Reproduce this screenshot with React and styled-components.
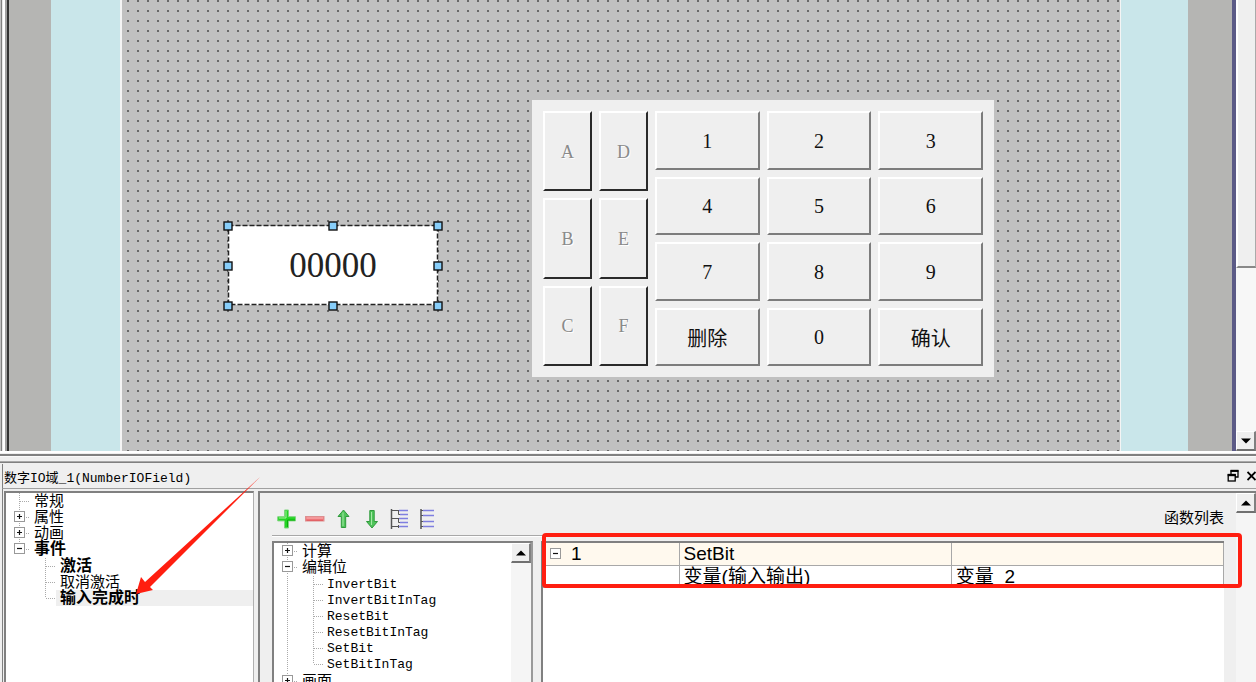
import React, { useState } from "react";
import styled, { createGlobalStyle, css } from "styled-components";

const letterKeys = ["A", "D", "B", "E", "C", "F"];
const digitKeys = ["1", "2", "3", "4", "5", "6", "7", "8", "9", "删除", "0", "确认"];

const eventTree = [
  { label: "常规" },
  { label: "属性", expandable: true },
  { label: "动画", expandable: true },
  {
    label: "事件",
    expandable: true,
    open: true,
    bold: true,
    children: [
      { label: "激活", bold: true },
      { label: "取消激活" },
      { label: "输入完成时", bold: true },
    ],
  },
];

const functionTree = [
  { label: "计算", expandable: true },
  {
    label: "编辑位",
    expandable: true,
    open: true,
    children: [
      { label: "InvertBit" },
      { label: "InvertBitInTag" },
      { label: "ResetBit" },
      { label: "ResetBitInTag" },
      { label: "SetBit" },
      { label: "SetBitInTag" },
    ],
  },
  { label: "画面", expandable: true },
];

export default function App() {
  const [selectedEvent, setSelectedEvent] = useState("输入完成时");
  const [selectedFunction, setSelectedFunction] = useState();

  return (
    <>
      <GlobalStyle />
      <Page>
        <Editor />
        <Dock>
          <TitleBar>
            <DockTitle>数字IO域_1(NumberIOField)</DockTitle>
            <TitleButton aria-label="还原">
              <RestoreIcon />
            </TitleButton>
            <TitleButton aria-label="关闭">
              <CloseIcon />
            </TitleButton>
          </TitleBar>
          <DockBody>
            <EventPane>
              <Tree
                nodes={eventTree}
                selected={selectedEvent}
                onSelect={setSelectedEvent}
              />
              <Arrow viewBox="0 0 130 122" aria-hidden="true">
                <path
                  d="M1 118 L6 101 L10 106 L125 1 L15 111 L18 114 Z"
                  fill="#ff1e10"
                />
              </Arrow>
            </EventPane>
            <FunctionPane>
              <FunctionContent>
                <Toolbar>
                  <ToolButton aria-label="添加">
                    <PlusIcon />
                  </ToolButton>
                  <ToolButton aria-label="移除">
                    <MinusIcon />
                  </ToolButton>
                  <ToolButton aria-label="上移">
                    <UpIcon />
                  </ToolButton>
                  <ToolButton aria-label="下移">
                    <DownIcon />
                  </ToolButton>
                  <ToolButton aria-label="展开">
                    <ExpandIcon />
                  </ToolButton>
                  <ToolButton aria-label="收起">
                    <CollapseIcon />
                  </ToolButton>
                  <ToolbarTitle>函数列表</ToolbarTitle>
                </Toolbar>
                <Panels>
                  <TreePanel>
                    <Tree
                      nodes={functionTree}
                      selected={selectedFunction}
                      onSelect={setSelectedFunction}
                      more
                    />
                    <Scrollbar>
                      <ScrollButton aria-label="向上滚动">
                        <Triangle />
                      </ScrollButton>
                    </Scrollbar>
                  </TreePanel>
                  <TablePanel>
                    <FunctionTable>
                      <tbody>
                        <HeadRow>
                          <td>
                            <IndexCell>
                              <Expander aria-label="折叠">
                                <ExpanderSign open />
                              </Expander>
                              1
                            </IndexCell>
                          </td>
                          <td>SetBit</td>
                          <td />
                        </HeadRow>
                        <tr>
                          <td />
                          <td>变量(输入输出)</td>
                          <td>变量{"\u00a0\u00a0"}2</td>
                        </tr>
                      </tbody>
                    </FunctionTable>
                    <Highlight />
                  </TablePanel>
                </Panels>
              </FunctionContent>
              <Scrollbar>
                <ScrollButton aria-label="向上滚动">
                  <Triangle />
                </ScrollButton>
              </Scrollbar>
            </FunctionPane>
          </DockBody>
        </Dock>
      </Page>
    </>
  );
}

function Editor() {
  return (
    <EditorRow>
      <FrameEdge />
      <Gutter $width={42} />
      <Band $width={69} />
      <Canvas>
        <IOField>
          <input aria-label="数字IO域_1" value="00000" readOnly />
          <SelectionFrame />
        </IOField>
        <Keypad>
          <LetterGrid>
            {letterKeys.map((key) => (
              <LetterKey key={key} disabled>
                {key}
              </LetterKey>
            ))}
          </LetterGrid>
          <DigitGrid>
            {digitKeys.map((key) => (
              <DigitKey key={key}>{key}</DigitKey>
            ))}
          </DigitGrid>
        </Keypad>
      </Canvas>
      <Band $width={67} />
      <Gutter $width={44} />
      <EditorScrollbar>
        <Thumb />
        <Track />
        <ScrollButton aria-label="向下滚动">
          <Triangle down />
        </ScrollButton>
      </EditorScrollbar>
    </EditorRow>
  );
}

function Tree({ nodes, selected, onSelect, more }) {
  return (
    <TreeList>
      {nodes.map((node, index) => {
        const last = index === nodes.length - 1 && !more;
        return (
          <li key={node.label}>
            <TreeRow>
              <Rail $vertical={last ? "half" : "full"}>
                {node.expandable && (
                  <Expander aria-label={node.open ? "折叠" : "展开"}>
                    <ExpanderSign open={node.open} />
                  </Expander>
                )}
              </Rail>
              <TreeLabel $bold={node.bold}>{node.label}</TreeLabel>
            </TreeRow>
            {node.children && (
              <ChildList>
                {node.children.map((child, i) => (
                  <TreeRow as="li" key={child.label}>
                    <ParentRail $line={!last} />
                    <Rail
                      $vertical={
                        i === node.children.length - 1 ? "half" : "full"
                      }
                    />
                    <TreeLabel
                      $bold={child.bold}
                      $latin={/^[A-Z]/i.test(child.label)}
                      $selected={child.label === selected}
                      onClick={() => onSelect(child.label)}
                    >
                      {child.label}
                    </TreeLabel>
                  </TreeRow>
                ))}
              </ChildList>
            )}
          </li>
        );
      })}
    </TreeList>
  );
}

function SelectionFrame() {
  const xs = [5, 110, 215];
  const ys = [5, 45, 85];
  return (
    <FrameSvg viewBox="0 0 220 90" aria-hidden="true">
      <rect
        x="5.5"
        y="4.5"
        width="209"
        height="79"
        fill="none"
        stroke="#222"
        strokeWidth="1.5"
        strokeDasharray="5 2"
      />
      {xs.map((x) =>
        ys.map((y) =>
          x === 110 && y === 45 ? null : (
            <rect
              key={`${x}-${y}`}
              x={x - 4}
              y={y - 4}
              width="8"
              height="8"
              fill="#87cefa"
              stroke="#111"
              strokeWidth="1.4"
            />
          )
        )
      )}
    </FrameSvg>
  );
}

function ExpanderSign({ open }) {
  return (
    <svg width="12" height="12" viewBox="0 0 12 12">
      <rect x="0.5" y="0.5" width="10" height="10" fill="#fff" stroke="#999" />
      <path
        d={open ? "M3 5.5h5" : "M3 5.5h5M5.5 3v5"}
        stroke="#111"
        strokeWidth="1.2"
      />
    </svg>
  );
}

function Triangle({ down }) {
  return (
    <svg width="10" height="6" viewBox="0 0 10 6">
      <path d={down ? "M0 0.5h10L5 5.5z" : "M0 5.5h10L5 0.5z"} fill="#000" />
    </svg>
  );
}

function RestoreIcon() {
  return (
    <svg width="12" height="14" viewBox="0 0 12 14" fill="none" stroke="#000">
      <path d="M4 5V2h7v6H8" strokeWidth="1.3" />
      <path d="M3.5 1.8h8" strokeWidth="2" />
      <rect x="1.2" y="5.5" width="7" height="6.5" strokeWidth="1.3" />
      <path d="M0.7 6.2h8" strokeWidth="2" />
    </svg>
  );
}

function CloseIcon() {
  return (
    <svg width="9" height="10" viewBox="0 0 9 10">
      <path d="M0.5 1l8 8M8.5 1l-8 8" stroke="#000" strokeWidth="1.8" />
    </svg>
  );
}

function PlusIcon() {
  return (
    <svg width="20" height="20" viewBox="0 0 20 20">
      <path
        d="M7.5 1h4v6.7h7v4.2h-7V19h-4v-7.100H0.7V7.7h6.800z"
        fill="#25d425"
        stroke="#7fd47f"
      />
      <path d="M9 2v7H2" stroke="#a6f3a0" fill="none" />
      <path d="M10.5 11v7M10.5 11H18" stroke="#0aae0a" fill="none" />
    </svg>
  );
}

function MinusIcon() {
  return (
    <svg width="20" height="20" viewBox="0 0 20 20">
      <rect
        x="0.5"
        y="7.5"
        width="18.5"
        height="4.5"
        fill="#f07b7f"
        stroke="#dc8f90"
      />
      <path d="M1.5 9h16.5" stroke="#f9b6b6" />
      <path d="M1.5 11.3h16.5" stroke="#e25a5e" />
    </svg>
  );
}

function UpIcon() {
  return (
    <svg width="20" height="20" viewBox="0 0 20 20">
      <path
        d="M10.5 1L16 7.5h-3.300V18.5H8.3V7.5H5z"
        fill="#4fc45a"
        stroke="#2f9a3c"
      />
      <path d="M10 3.5V17" stroke="#a5e8a5" />
    </svg>
  );
}

function DownIcon() {
  return (
    <svg width="20" height="20" viewBox="0 0 20 20">
      <path
        d="M11 19L16.5 12.5h-3.300V1.5H8.800v11H5.5z"
        fill="#4fc45a"
        stroke="#2f9a3c"
      />
      <path d="M10.5 3V16" stroke="#a5e8a5" />
    </svg>
  );
}

function ExpandIcon() {
  return (
    <svg width="20" height="20" viewBox="0 0 20 20" fill="none">
      <path d="M2.5 0v20" stroke="#555" strokeWidth="1.5" />
      <path
        d="M2 1.500h8M2 9.500h8M2 17.500h8M9.500 1.500v4h2M9.500 9.500v4h2M9.500 16v3"
        stroke="#555"
      />
      <path
        d="M10 1.500h9M11 5.500h8M10 9.500h9M11 13.500h8M10 17.500h9"
        stroke="#7f7fe0"
        strokeWidth="1.4"
      />
    </svg>
  );
}

function CollapseIcon() {
  return (
    <svg width="20" height="20" viewBox="0 0 20 20" fill="none">
      <path d="M4 0v20" stroke="#555" strokeWidth="1.5" />
      <path d="M4 1.500h3M4 6.500h3M4 12.500h3M4 17.500h3" stroke="#555" />
      <path
        d="M6 1.500h11M6 6.500h11M6 12.500h11M6 17.500h11"
        stroke="#7f7fe0"
        strokeWidth="1.4"
      />
    </svg>
  );
}

const GlobalStyle = createGlobalStyle`
  * {
    box-sizing: border-box;
  }
  body {
    margin: 0;
    background: #efefef;
    color: #000;
    font-family: "Liberation Mono", "Noto Sans CJK SC", monospace;
    font-size: 15px;
    overflow: hidden;
  }
  button {
    border: none;
    padding: 0;
    background: none;
    color: inherit;
    font: inherit;
    display: flex;
    align-items: center;
    justify-content: center;
  }
  svg {
    display: block;
    flex: none;
  }
  ul {
    list-style: none;
    margin: 0;
    padding: 0;
  }
`;

const Page = styled.div`
  display: flex;
  flex-direction: column;
  height: 100vh;
`;

/* editor */

const EditorRow = styled.main`
  flex: 1;
  min-height: 0;
  display: flex;
  overflow: hidden;
`;

const FrameEdge = styled.div`
  width: 9px;
  background: linear-gradient(
    to right,
    #c0c0c0 1px,
    #808080 1px 2px,
    #e8e8e8 2px 3px,
    #fff 3px 5px,
    #a0a0a0 5px 7px,
    #333 7px
  );
`;

const Gutter = styled.div`
  width: ${(props) => props.$width}px;
  background: #b5b5b3;
`;

const Band = styled.div`
  width: ${(props) => props.$width}px;
  background: #c9e6ea;
`;

const Canvas = styled.section`
  flex: 1;
  position: relative;
  border-left: 2px solid #f4f4f4;
  border-right: 1px solid #f4f4f4;
  background: conic-gradient(from 90deg at 8px 8px, #686868 25%, #c0c0c0 0) -3px
    2px / 10px 10px;
`;

const IOField = styled.div`
  position: absolute;
  left: 106px;
  top: 226px;
  width: 210px;
  height: 79px;

  input {
    width: 100%;
    height: 100%;
    border: none;
    padding: 0;
    background: #fff;
    color: #222;
    text-align: center;
    font: 35px "Liberation Serif", serif;
    outline: none;
  }
`;

const FrameSvg = styled.svg`
  position: absolute;
  left: -5px;
  top: -5px;
  width: 220px;
  height: 90px;
`;

const Keypad = styled.div`
  position: absolute;
  left: 410px;
  top: 100px;
  width: 462px;
  height: 277px;
  padding: 11px;
  display: flex;
  gap: 7px;
  background: #efefef;
`;

const LetterGrid = styled.div`
  display: grid;
  grid-template-columns: 49px 49px;
  grid-auto-rows: 1fr;
  gap: 7px;
`;

const DigitGrid = styled.div`
  flex: 1;
  display: grid;
  grid-template-columns: repeat(3, 1fr);
  grid-auto-rows: 1fr;
  gap: 7px;
`;

const Key = styled.button`
  && {
    border: 2px solid #fff;
    padding-top: 2px;
    background: #efefef;
    font: 20px "Liberation Serif", "Noto Sans CJK SC", serif;
  }
`;

const LetterKey = styled(Key)`
  && {
    border-right-color: #2a2a2a;
    border-bottom-color: #2a2a2a;
    color: #8a8a8a;
    font-size: 18px;
    text-shadow: 1px 1px #fff;
  }
`;

const DigitKey = styled(Key)`
  && {
    border-right-color: #7c7c7c;
    border-bottom-color: #7c7c7c;
    color: #111;
  }
`;

/* scrollbars */

const Scrollbar = styled.div`
  flex: none;
  width: 20px;
  background: #f5f5f5;
`;

const ScrollButton = styled.button`
  && {
    width: 20px;
    height: 20px;
    border: 1px solid #fff;
    border-right: 2px solid #808080;
    border-bottom: 2px solid #707070;
    background: #efefef;
  }
`;

const EditorScrollbar = styled(Scrollbar)`
  width: 24px;
  display: flex;
  flex-direction: column;
  border-left: 4px solid #5b5a86;
  box-shadow: inset 1px 0 #ccc, inset 2px 0 #222;
  background: #f7f7f7;
`;

const Thumb = styled.div`
  flex: 267;
  border-left: 2px solid #fff;
  border-right: 1px solid #aaa;
  border-bottom: 2px solid #888;
  background: #efefef;
`;

const Track = styled.div`
  flex: 164;
  background: #f7f7f7;
`;

/* dock */

const Dock = styled.section`
  flex: none;
  height: 231px;
  display: flex;
  flex-direction: column;
  overflow: hidden;
  padding-top: 13px;
  background: linear-gradient(
    #fff 2px,
    #efefef 2px 3px,
    #808080 3px 5px,
    #fafafa 5px 6px,
    #efefef 6px 10px,
    #a8a8a8 10px 11px,
    #808080 11px 12px,
    #efefef 12px
  );
`;

const TitleBar = styled.header`
  flex: none;
  height: 25px;
  margin-left: 2px;
  padding-left: 1px;
  display: flex;
  align-items: center;
  gap: 8px;
  border-left: 1px solid #808080;
  border-bottom: 1px solid #a0a0a0;
`;

const DockTitle = styled.h1`
  flex: 1;
  margin: 0;
  font-size: 13px;
  font-weight: normal;
`;

const TitleButton = styled.button`
  flex: none;
`;

const DockBody = styled.div`
  flex: 1;
  min-height: 0;
  display: flex;
  gap: 4px;
  margin-left: 2px;
  padding: 2px 0 0 1px;
  border-left: 1px solid #808080;
`;

const EventPane = styled.aside`
  flex: none;
  width: 250px;
  position: relative;
  border: 2px solid #808080;
  border-right: 1px solid #b0b0b0;
  border-bottom: none;
  background: #fff;
`;

const Arrow = styled.svg`
  position: absolute;
  left: 129px;
  top: -17px;
  width: 130px;
  height: 122px;
  pointer-events: none;
`;

const FunctionPane = styled.section`
  flex: 1;
  min-width: 0;
  display: flex;
  border-left: 2px solid #808080;
  border-top: 2px solid #808080;
`;

const FunctionContent = styled.div`
  flex: 1;
  min-width: 0;
  display: flex;
  flex-direction: column;
  padding: 0 12px;
`;

const Toolbar = styled.div`
  flex: none;
  display: flex;
  gap: 8px;
  padding: 16px 0 6px 5px;
  border-bottom: 1px solid #a8a8a8;
  box-shadow: 0 1px #fff;
`;

const ToolButton = styled.button`
  width: 20px;
  height: 20px;
`;

const ToolbarTitle = styled.span`
  margin-left: auto;
  line-height: 22px;
  height: 20px;
`;

const Panels = styled.div`
  flex: 1;
  min-height: 0;
  display: flex;
  gap: 8px;
  padding-top: 5px;
`;

const Sunken = css`
  border-left: 2px solid #808080;
  border-top: 2px solid #808080;
  background: #fff;
`;

const TreePanel = styled.div`
  ${Sunken}
  flex: none;
  width: 261px;
  display: flex;
  justify-content: space-between;
  border-right: 2px solid #999;
`;

/* tree */

const TreeList = styled.ul`
  flex: 1;
  padding-left: 8px;
`;

const ChildList = styled.ul`
  padding: 1px 0;
`;

const TreeRow = styled.div`
  display: flex;
  height: 16px;
`;

const dotsY = "repeating-linear-gradient(#aaa 0 1px, transparent 1px 2px)";
const dotsX =
  "repeating-linear-gradient(to right, #aaa 0 1px, transparent 1px 2px)";

const Rail = styled.span`
  flex: none;
  width: 16px;
  display: flex;
  align-items: center;
  background: ${dotsY} 5px 0 / 1px
      ${(props) => (props.$vertical === "half" ? "8px" : "100%")} no-repeat,
    ${dotsX} 6px 8px / 10px 1px no-repeat;
`;

const ParentRail = styled.span`
  flex: none;
  width: 26px;
  background: ${(props) => (props.$line ? dotsY : "none")} 5px 0 / 1px 100%
    no-repeat;
`;

const Expander = styled.button`
  flex: none;
  width: 12px;
  height: 12px;
`;

const TreeLabel = styled.span`
  flex: 1;
  padding-left: ${(props) => (props.$latin ? 3 : 4)}px;
  line-height: ${(props) => (props.$latin ? 17 : 19)}px;
  white-space: nowrap;
  font-size: ${(props) => (props.$latin ? 13 : props.$bold ? 16 : 15)}px;
  font-weight: ${(props) => (props.$bold ? "bold" : "normal")};
  background: ${(props) => (props.$selected ? "#efefef" : "none")};
`;

/* function table */

const TablePanel = styled.div`
  ${Sunken}
  flex: 1;
  min-width: 0;
  position: relative;
`;

const FunctionTable = styled.table`
  width: 100%;
  table-layout: fixed;
  border-collapse: collapse;
  font: 19px "Liberation Sans", "Noto Sans CJK SC", sans-serif;

  td {
    height: 22px;
    padding: 0 4px;
    line-height: 21px;
    white-space: nowrap;
    border-right: 1px solid #a8a8a8;
    border-bottom: 1px solid #a8a8a8;
  }
  td:first-child {
    width: 20%;
  }
`;

const HeadRow = styled.tr`
  background: #fff9ee;
`;

const IndexCell = styled.div`
  display: flex;
  align-items: center;
  gap: 9px;
  padding-left: 3px;
`;

const Highlight = styled.div`
  position: absolute;
  left: -1px;
  right: -18px;
  top: -10px;
  height: 55px;
  border: 4px solid #ff1e10;
  border-radius: 4px;
  pointer-events: none;
`;
